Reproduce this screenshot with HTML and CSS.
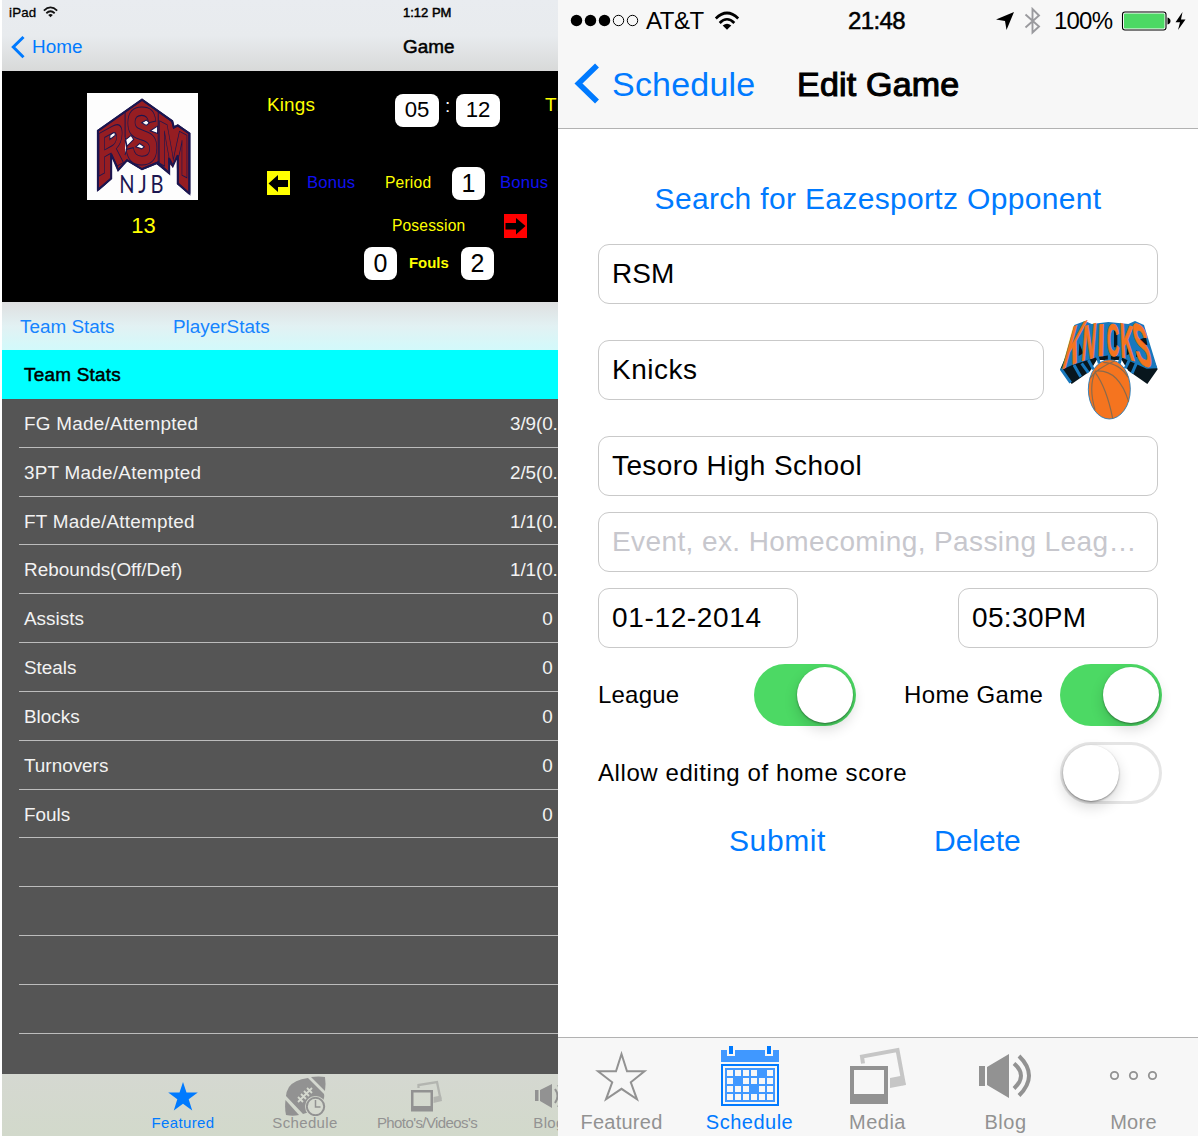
FILE: index.html
```html
<!DOCTYPE html>
<html lang="en">
<head>
<meta charset="utf-8">
<title>Game</title>
<link rel="stylesheet" href="styles.css">
</head>
<body>
<div class="screens">
  <section class="ipad">
    <header class="ipad-head">
      <div class="ipad-status">
        <span class="device">iPad</span>
        <svg class="wifi-s" width="15" height="12" viewBox="0 0 36 27"><g fill="none" stroke="#111" stroke-width="4.2"><path d="M2 10Q18-5 34 10"/><path d="M8 16.500Q18 7 28 16.500"/></g><path d="M12.500 20.500Q18 15.500 23.500 20.500L18 26z" fill="#111"/></svg>
        <span class="ipad-time med">1:12 PM</span>
      </div>
      <div class="ipad-nav">
        <svg width="16" height="24" viewBox="0 0 16 24"><path d="M14.500 2L4.300 12L14.500 22.300" fill="none" stroke="#007aff" stroke-width="3"/></svg>
        <span class="home">Home</span>
        <span class="ipad-title med">Game</span>
      </div>
    </header>

    <div class="board">
      <div class="team">
        <svg width="111" height="107" viewBox="81 39 335 320" preserveAspectRatio="none">
          <rect x="81" y="39" width="335" height="320" fill="#fdfdfd"/>
          <path d="M114 152L247 59L338 123L343 142L355 136L390 160V340L355 310V225L340 257L329 240V279L295 252V247L247 267L202 240L175 270L155 222V295L114 329z" fill="#961d22" stroke="#1b1650" stroke-width="6"/>
          <path d="M196 98V170L202 198L196 225M296 96V250M196 180L214 166L222 178L200 200zM228 200l12-10 14 10-8 6zM246 128l14-8 10 8-10 8zM272 152l22-14v22zM150 166l16-14v14l-16 12zM327 200l10 46M355 225l-15 30" fill="#fdfdfd" stroke="#1b1650" stroke-width="3"/>
          <g class="crest" font-family="Liberation Sans" font-weight="bold" font-size="100">
            <text transform="matrix(1.160 -.64 0 1.850 110 292)">R</text>
            <text transform="matrix(1.540 0 0 2.450 195 252)">S</text>
            <text transform="matrix(1.180 .62 0 1.850 292 245)">M</text>
          </g>
          <path d="M118 332L154 298V226L174 274L201 244L247 271L293 254L328 284V250L340 262L352 232V314L390 344V359H118z" fill="#fdfdfd"/>
          <path d="M114 329L154 295V222L175 270L202 240L247 267L295 247L329 279V235L340 257L355 225V310L390 340" fill="none" stroke="#1b1650" stroke-width="6"/>
          <path d="M114 329V152L247 59L338 123L343 142L355 136L390 160V340" fill="none" stroke="#1b1650" stroke-width="6"/>
          <text transform="translate(178 339) scale(.82 1)" font-family="Lato" font-size="74" letter-spacing="14" fill="#1b1650">NJB</text>
        </svg>
        <span class="points">13</span>
      </div>
      <div class="plays">
        <div class="line line-clock">
          <span class="club">Kings</span>
          <span class="box wide clock-m">05</span>
          <span class="colon">:</span>
          <span class="box wide">12</span>
          <span class="club away">Th</span>
        </div>
        <div class="line line-period">
          <svg class="arrow" width="23" height="24" viewBox="0 0 23 24"><rect width="23" height="24" fill="#ff0"/><path d="M1.500 12.500L11 4V9H21V16H11V21z" fill="#000"/></svg>
          <span class="bonus">Bonus</span>
          <span class="period">Period</span>
          <span class="box">1</span>
          <span class="bonus b2">Bonus</span>
        </div>
        <div class="line line-poss">
          <span class="poss">Posession</span>
          <svg width="23" height="24" viewBox="0 0 23 24"><rect width="23" height="24" fill="#f00"/><path d="M21.500 12L12 4V9H1.500V15.500H12V20.500z" fill="#000"/></svg>
        </div>
        <div class="line line-fouls">
          <span class="box">0</span>
          <span class="fouls">Fouls</span>
          <span class="box">2</span>
        </div>
      </div>
    </div>

    <div class="switcher"><span class="sw1">Team Stats</span><span class="sw2">PlayerStats</span></div>
    <div class="section-head med">Team Stats</div>
    <div class="stats">
      <div class="row"><span>FG Made/Attempted</span><span class="cut">3/9(0.</span></div>
      <div class="row"><span>3PT Made/Atempted</span><span class="cut">2/5(0.</span></div>
      <div class="row"><span>FT Made/Attempted</span><span class="cut">1/1(0.</span></div>
      <div class="row"><span class="tight">Rebounds(Off/Def)</span><span class="cut">1/1(0.</span></div>
      <div class="row"><span class="tight">Assists</span><span class="num">0</span></div>
      <div class="row"><span class="tight">Steals</span><span class="num">0</span></div>
      <div class="row"><span class="tight">Blocks</span><span class="num">0</span></div>
      <div class="row"><span class="tight">Turnovers</span><span class="num">0</span></div>
      <div class="row"><span class="tight">Fouls</span><span class="num">0</span></div>
      <div class="row"></div>
      <div class="row"></div>
      <div class="row"></div>
      <div class="row"></div>
    </div>

    <nav class="ipad-tabs">
      <div class="itab on">
        <svg width="44" height="42" viewBox="0 0 44 42"><path d="M22 8L25.500 18.500H36.800L27.700 25.200L31.200 36.500L22 29.700L12.800 36.500L16.300 25.200L7.200 18.500H18.500z" fill="#007aff"/></svg>
        <span>Featured</span>
      </div>
      <div class="itab">
        <svg width="44" height="42" viewBox="0 0 44 42"><g fill="#929292"><path d="M28 3Q36 2 42 3Q43 9 42 17z"/><path d="M25 4Q11 6 6 13Q3 18 3 22L20 40Q35 36 39 28Q42 24 41 20z"/><path d="M2.500 26Q1.500 34 3 41Q10 42.500 16 41z"/></g><path d="M15 28L29 14M15 23l5 5M18 20l5 5M21 17l5 5M24 14l5 5" stroke="#d5d9cf" stroke-width="1.800" fill="none"/><circle cx="32.500" cy="32.500" r="10.500" fill="#d5d9cf"/><circle cx="32.500" cy="32.500" r="8.700" fill="none" stroke="#929292" stroke-width="2"/><path d="M32.500 26V33H37.500" fill="none" stroke="#929292" stroke-width="1.500"/></svg>
        <span class="sch">Schedule</span>
      </div>
      <div class="itab">
        <svg width="44" height="42" viewBox="0 0 44 42"><path d="M13.500 14V11L32 8L35.500 25" fill="none" stroke="#b3b5b0" stroke-width="2.300"/><path d="M28.500 23L36 21.500L37 27L28.500 29z" fill="#b3b5b0"/><path d="M6 16H28V37.500H6zM8.500 18.500V32H25.500V18.500z" fill="#929292" fill-rule="evenodd"/></svg>
        <span class="photos">Photo's/Videos's</span>
      </div>
      <div class="itab">
        <svg width="44" height="42" viewBox="0 0 44 42"><g fill="#929292"><path d="M8 16h3.500v11H8zM13 16L25 10V34L13 27z"/></g><path d="M28 15Q33 22 28 29M31 11Q38 22 31 33" fill="none" stroke="#929292" stroke-width="2"/></svg>
        <span>Blog</span>
      </div>
    </nav>
  </section>

  <section class="phone">
    <header class="phone-head">
      <div class="phone-status">
        <svg class="dots" width="70" height="14" viewBox="0 0 70 14"><circle cx="6.500" cy="6.500" r="5.700"/><circle cx="20.500" cy="6.500" r="5.700"/><circle cx="34.500" cy="6.500" r="5.700"/><g fill="none" stroke="#000"><circle cx="48.500" cy="6.500" r="5.200"/><circle cx="62.500" cy="6.500" r="5.200"/></g></svg>
        <span class="carrier">AT&amp;T</span>
        <svg class="wifi" width="26" height="20" viewBox="0 0 26 20"><g fill="none" stroke="#000" stroke-width="2.700"><path d="M1.800 7.500Q13-3.500 24.200 7.500"/><path d="M5.700 12Q13 4.500 20.300 12"/></g><path d="M8.700 14.600Q13 10.800 17.300 14.600L13 18.800z"/></svg>
        <span class="time med">21:48</span>
        <svg class="loc" width="20" height="20" viewBox="0 0 20 20"><path d="M19 1L11.500 19L10 10L1 8.500z"/></svg>
        <svg class="bt" width="18" height="28" viewBox="0 0 18 28"><path d="M1.500 7.500L15 19.500L8.500 25.500V2L15 8.500L1.500 20.500" fill="none" stroke="#9a9a9e" stroke-width="1.900"/></svg>
        <span class="pct">100%</span>
        <svg class="batt" width="66" height="22" viewBox="0 0 66 22"><rect x="1.500" y="2" width="43.500" height="18" rx="2.500" fill="#fff" stroke="#000" stroke-width="1.100"/><rect x="3" y="3.500" width="40.500" height="15" rx="1" fill="#4cd964"/><path d="M46.500 7.500Q49.500 8.500 49.500 11T46.500 14.500z"/><path d="M61.500 2L54.500 12.200H59L57 20L64.500 9.600H60z"/></svg>
      </div>
      <div class="phone-nav">
        <svg width="28" height="42" viewBox="0 0 28 42"><path d="M25 2.500L6.500 20.500L25 38.500" fill="none" stroke="#007aff" stroke-width="5.600"/></svg>
        <span class="back">Schedule</span>
        <span class="title med">Edit Game</span>
      </div>
    </header>

    <main class="form">
      <a class="search">Search for Eazesportz Opponent</a>
      <div class="field rsm">RSM</div>
      <div class="opp">
        <div class="field knicks">Knicks</div>
        <svg width="98" height="100" viewBox="60 60 294 300" preserveAspectRatio="none">
          <path d="M62 205L95 252L150 214L170 180H245L265 212L322 252L353 208L330 150L90 140z" fill="#08161d"/>
          <path d="M62 205L92 248M102 195L122 230M125 190L145 218M145 180L160 208M172 170L178 190M208 165V185M243 170L238 190M268 180L256 205M290 188L276 220" stroke="#1878bd" stroke-width="9"/>
          <path d="M103 75L135 63L155 72L205 66L265 72L285 63L312 75L352 205L320 206L280 188L240 170L208 166L170 172L95 196L64 210z" fill="#1878bd"/>
          <path d="M118 130l12 30-14 8zM222 92h10v50h-10zM262 125L272 160L260 166zM300 118L318 112L322 135L306 134zM290 150l14 24-16-4z" fill="#08161d"/>
          <g class="knicks-name" font-family="Liberation Sans" font-weight="bold" font-size="100">
            <text transform="matrix(.66 -.3 -.5 1.850 62 209)">K</text>
            <text transform="matrix(.58 -.16 -.12 1.500 122 183)">N</text>
            <text transform="matrix(.8 -.04 -.03 1.360 171 168)">I</text>
            <text transform="matrix(.52 .05 .02 1.360 201 166)">C</text>
            <text transform="matrix(.58 .18 .06 1.480 242 170)">K</text>
            <text transform="matrix(.74 .34 .3 1.780 291 186)">S</text>
          </g>
          <ellipse cx="208" cy="268" rx="63" ry="89" fill="#f5741f" stroke="#1878bd" stroke-width="2.500"/>
          <path d="M150 235Q170 205 225 182M165 213Q235 205 266 305M166 218Q200 265 218 355M166 214Q145 260 165 330M190 187Q240 190 264 232" fill="none" stroke="#8a6a4c" stroke-width="3.500"/>
        </svg>
      </div>
      <div class="field venue">Tesoro High School</div>
      <div class="field event">Event, ex. Homecoming, Passing Leag…</div>
      <div class="when">
        <div class="field date">01-12-2014</div>
        <div class="field hour">05:30PM</div>
      </div>
      <div class="toggles">
        <span class="league">League</span>
        <span class="toggle t-on"><i></i></span>
        <span class="homegame">Home Game</span>
        <span class="toggle t-on"><i></i></span>
      </div>
      <div class="toggles second">
        <span class="allow">Allow editing of home score</span>
        <span class="toggle"><i></i></span>
      </div>
      <div class="actions"><a class="submit">Submit</a><a class="delete">Delete</a></div>
    </main>

    <nav class="phone-tabs">
      <div class="tab">
        <svg width="64" height="64" viewBox="0 0 64 64"><path d="M31.500 10L37 27.200H54.500L40.800 38.300L47 55.300L31.500 44.800L16 55.300L22.200 38.300L8 27.200H26z" fill="none" stroke="#929292" stroke-width="2"/></svg>
        <span>Featured</span>
      </div>
      <div class="tab on">
        <svg width="64" height="64" viewBox="0 0 64 64" shape-rendering="crispEdges">
          <path d="M3 6H61V18H3z" fill="#4098ff"/><path d="M9 2h8v10H9zM47 2h8v10h-8z" fill="#f7f7f7"/><path d="M11 2h4v8h-4zM49 2h4v8h-4z" fill="#007aff"/>
          <rect x="4" y="21" width="56" height="40" fill="#f7f7f7" stroke="#007aff" stroke-width="2"/><rect x="7" y="24" width="50" height="34" fill="#4098ff"/>
          <path d="M9 26h6v6H9zm8 0h6v6h-6zm8 0h6v6h-6zm8 0h6v6h-6zm16 0h6v6h-6zM9 34h6v6H9zm16 0h6v6h-6zm8 0h6v6h-6zm8 0h6v6h-6zm8 0h6v6h-6zM9 42h6v6H9zm8 0h6v6h-6zm8 0h6v6h-6zm16 0h6v6h-6zm8 0h6v6h-6zM9 50h6v6H9zm8 0h6v6h-6zm8 0h6v6h-6zm8 0h6v6h-6zm8 0h6v6h-6zm8 0h6v6h-6z" fill="#f7f7f7"/>
        </svg>
        <span class="sched">Schedule</span>
      </div>
      <div class="tab">
        <svg width="64" height="64" viewBox="0 0 64 64"><path d="M17 19.500L16 12.500L51.500 6L58 41" fill="none" stroke="#c6c6c6" stroke-width="4"/><path d="M44 34L57 31.500L59.800 41L44 44z" fill="#c6c6c6"/><path d="M4 22H42V60H4zM8 26V50H38V26z" fill="#929292" fill-rule="evenodd"/></svg>
        <span class="sched">Media</span>
      </div>
      <div class="tab">
        <svg width="64" height="64" viewBox="0 0 64 64"><path d="M5 22h6v20H5zM13 23L35 10V54L13 41z" fill="#929292"/><path d="M40 19.500Q54 31.500 40 44.500M45 12Q65 31.500 45 51.500" fill="none" stroke="#929292" stroke-width="4"/></svg>
        <span class="sched">Blog</span>
      </div>
      <div class="tab">
        <svg width="64" height="64" viewBox="0 0 64 64"><g fill="none" stroke="#929292" stroke-width="1.800"><circle cx="12.500" cy="31.500" r="3.700"/><circle cx="31.500" cy="31.500" r="3.700"/><circle cx="50.500" cy="31.500" r="3.700"/></g></svg>
        <span>More</span>
      </div>
    </nav>
  </section>
</div>
</body>
</html>
```
FILE: styles.css
```css
* { box-sizing: border-box; }
body { margin: 0; background: #fff; font-family: "Liberation Sans", Arial, sans-serif; color: #000; }
svg { display: block; flex: none; }
span, a { white-space: nowrap; }
.screens { display: flex; width: 1198px; height: 1136px; padding-left: 2px; overflow: hidden; }
.med { -webkit-text-stroke: .5px currentColor; }

/* tablet */
.ipad { width: 556px; height: 1136px; flex: none; overflow: hidden; display: flex; flex-direction: column; background: #555; font-size: 18.9px; }
.ipad-head { height: 71px; flex: none; background: linear-gradient(#e9ecf0, #e8ebee 50%, #d8d9d9); }
.ipad-status { display: flex; align-items: center; height: 24px; padding-left: 7px; font-size: 13.300px; }
.device { width: 34px; letter-spacing: .2px; -webkit-text-stroke: .3px #000; }
.ipad-time { margin-left: 345px; font-size: 13px; }
.ipad-nav { display: flex; align-items: center; height: 46px; padding-left: 7px; }
.home { width: 52px; margin-left: 7px; color: #007aff; }
.ipad-title { margin-left: 319px; }

.board { display: flex; height: 231px; flex: none; background: #000; color: #ff0; }
.team { display: flex; flex-direction: column; width: 111px; margin: 22px 0 0 85px; align-items: center; flex: none; }
.crest text { fill: #961d22; stroke: #1b1650; stroke-width: .9px; vector-effect: non-scaling-stroke; }
.points { margin: 13px 0 0 2px; font-size: 22px; line-height: 26px; }
.plays { flex: none; width: 400px; margin-left: 69px; padding-top: 23px; }
.line { display: flex; align-items: center; height: 32px; }
.box { display: flex; width: 33px; height: 33px; flex: none; align-items: center; justify-content: center; border-radius: 8px; background: #fff; color: #000; font-size: 25px; }
.wide { width: 44px; font-size: 22.200px; }
.club { width: 60px; margin-bottom: 11px; letter-spacing: .15px; }
.clock-m { margin-left: 68px; }
.colon { width: 17px; text-align: center; color: #fff; margin-bottom: 8px; }
.away { margin-left: 45px; }
.line-period { margin-top: 41px; }
.bonus { width: 50px; margin-left: 17px; font-size: 16.700px; letter-spacing: .2px; color: #1010f0; }
.period { width: 50px; margin: 0 17px 0 28px; font-size: 15.600px; letter-spacing: .2px; }
.b2 { margin-left: 15px; }
.line-poss { margin-top: 11px; padding-left: 125px; }
.poss { width: 112px; font-size: 15.600px; letter-spacing: .15px; }
.line-fouls { margin-top: 5px; padding-left: 97px; }
.fouls { width: 52px; margin-left: 12px; font-size: 14.900px; font-weight: bold; }

.switcher { display: flex; align-items: center; height: 48px; flex: none; padding: 1px 0 0 18px; background: linear-gradient(#dedfe0, #e2f1f3 50%, #d2fafb); color: #1684ff; }
.sw1 { width: 153px; }
.section-head { height: 49px; flex: none; line-height: 49px; padding-left: 22px; background: #0ff; letter-spacing: .25px; }
.stats { height: 675px; flex: none; padding-left: 17px; color: #f2f2f2; }
.row { display: flex; align-items: center; justify-content: space-between; height: 48.830px; padding: 2px 0 0 5px; border-bottom: 1px solid #bcbcbc; letter-spacing: .25px; }
.tight { letter-spacing: 0; }
.cut { width: 48px; letter-spacing: -.1px; }
.num { padding-right: 5px; }

.ipad-tabs { display: flex; height: 62px; flex: none; padding-left: 120px; background: linear-gradient(#d5d8d1, #d2d9cb); color: #929292; }
.itab { display: flex; flex-direction: column; align-items: center; width: 122px; flex: none; font-size: 15px; line-height: 17px; letter-spacing: .35px; }
.itab svg { height: 42px; }
.itab span { margin-top: -2px; }
.itab.on { color: #007aff; }
.itab .photos { letter-spacing: -.6px; }

/* phone */
.phone { width: 640px; height: 1136px; flex: none; display: flex; flex-direction: column; background: #fff; }
.phone-head { height: 129px; flex: none; background: #f7f7f7; border-bottom: 1px solid #b2b2b2; }
.phone-status { display: flex; align-items: center; height: 42px; padding-left: 12px; font-size: 24px; }
.carrier { width: 56px; margin-left: 6px; letter-spacing: -.5px; }
.wifi { margin-left: 12px; }
.time { width: 58px; margin-left: 108px; letter-spacing: -.6px; }
.loc { margin-left: 89px; }
.bt { margin-left: 9px; }
.pct { width: 60px; margin-left: 12px; letter-spacing: -.8px; }
.batt { margin-left: 7px; }
.phone-nav { display: flex; align-items: center; height: 84px; padding-left: 14px; font-size: 34px; }
.back { width: 144px; margin-left: 12px; color: #007aff; letter-spacing: .2px; }
.title { margin-left: 41px; letter-spacing: .2px; -webkit-text-stroke-width: 1.100px; }

.form { height: 908px; flex: none; padding: 50px 40px 0; }
.search, .actions { color: #007aff; font-size: 30px; line-height: 40px; }
.search { display: block; text-align: center; letter-spacing: .33px; height: 40px; }
.field { display: flex; align-items: center; height: 60px; padding-left: 13px; border: 1px solid #c9c9c9; border-radius: 11px; font-size: 28px; white-space: nowrap; }
.rsm { margin-top: 25px; }
.opp { display: flex; justify-content: space-between; align-items: center; margin-top: 16px; height: 100px; }
.knicks { width: 446px; letter-spacing: .5px; }
.knicks-name text { fill: #f5741f; stroke: #f5741f; stroke-width: .7px; vector-effect: non-scaling-stroke; }
.venue { margin-top: 16px; letter-spacing: .4px; }
.event { margin-top: 16px; letter-spacing: .4px; color: #c7c7cd; }
.when { display: flex; justify-content: space-between; margin-top: 16px; }
.date, .hour { width: 200px; }
.date { letter-spacing: .65px; }
.hour { letter-spacing: .35px; }
.toggles { display: flex; align-items: center; height: 62px; margin: 16px -4px 0 0; font-size: 24px; }
.league { width: 156px; letter-spacing: .2px; }
.homegame { width: 204px; padding-left: 48px; letter-spacing: .35px; }
.second { margin-top: 16px; }
.allow { width: 462px; letter-spacing: .58px; }
.toggle { display: flex; align-items: center; width: 102px; height: 62px; flex: none; padding: 0 3px; border-radius: 31px; box-shadow: inset 0 0 0 3px #e5e5e5; }
.toggle i { width: 56px; height: 56px; border-radius: 50%; background: #fff; box-shadow: 0 1px 2px rgba(0,0,0,.4), 0 6px 14px rgba(0,0,0,.16); }
.t-on { justify-content: flex-end; background: #4cd964; box-shadow: none; }
.actions { display: flex; margin-top: 17px; padding-left: 131px; }
.submit { width: 205px; letter-spacing: .6px; }

.phone-tabs { display: flex; height: 99px; flex: none; padding-top: 6px; background: #f7f7f7; border-top: 1px solid #b2b2b2; color: #929292; }
.tab { display: flex; flex-direction: column; align-items: center; width: 128px; flex: none; font-size: 20px; line-height: 24px; letter-spacing: .25px; }
.tab span { margin: 2px 1px 0 0; }
.tab .sched { letter-spacing: .5px; }
.tab.on { color: #007aff; }
```
